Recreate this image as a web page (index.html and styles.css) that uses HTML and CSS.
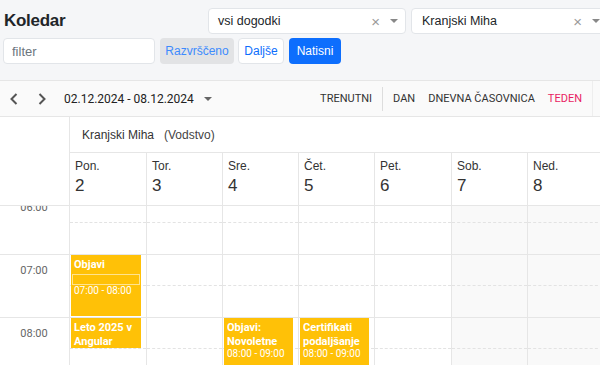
FILE: index.html
```html
<!DOCTYPE html>
<html lang="sl">
<head>
<meta charset="utf-8">
<title>Koledar</title>
<link rel="stylesheet" href="styles.css">
</head>
<body>
<div class="top">
  <div class="row1">
    <h1 class="title">Koledar</h1>
    <div class="select s1"><span class="val">vsi dogodki</span><span class="clear">×</span><span class="caret"></span></div>
    <div class="select s2"><span class="val">Kranjski Miha</span><span class="clear">×</span><span class="caret"></span></div>
  </div>
  <div class="row2">
    <input class="filter" type="text" placeholder="filter">
    <button class="btn btn-gray">Razvrščeno</button>
    <button class="btn btn-outline">Daljše</button>
    <button class="btn btn-primary">Natisni</button>
  </div>
</div>

<div class="toolbar">
  <svg class="chev first" width="8" height="12" viewBox="0 0 8 12"><path d="M6.5 1 L1.5 6 L6.5 11" fill="none" stroke="#555" stroke-width="2"/></svg>
  <svg class="chev second" width="8" height="12" viewBox="0 0 8 12"><path d="M1.5 1 L6.5 6 L1.5 11" fill="none" stroke="#555" stroke-width="2"/></svg>
  <span class="range">02.12.2024 - 08.12.2024</span>
  <span class="range-caret"></span>
  <div class="views">
    <span class="view">Trenutni</span>
    <span class="sep"></span>
    <span class="view">Dan</span>
    <span class="view gap">Dnevna časovnica</span>
    <span class="view gap active">Teden</span>
    <span class="end"></span>
  </div>
</div>

<div class="cal-head">
  <div class="corner"></div>
  <div class="resource"><span>Kranjski Miha</span><span class="role">(Vodstvo)</span></div>
  <div class="day"><div class="dname">Pon.</div><div class="dnum">2</div></div>
  <div class="day"><div class="dname">Tor.</div><div class="dnum">3</div></div>
  <div class="day"><div class="dname">Sre.</div><div class="dnum">4</div></div>
  <div class="day"><div class="dname">Čet.</div><div class="dnum">5</div></div>
  <div class="day"><div class="dname">Pet.</div><div class="dnum">6</div></div>
  <div class="day"><div class="dname">Sob.</div><div class="dnum">7</div></div>
  <div class="day"><div class="dname">Ned.</div><div class="dnum">8</div></div>
</div>

<div class="cal-body">
  <div class="grid">
    <div class="col times">
      <div class="hour"><span class="tlabel">06:00</span></div>
      <div class="hour"><span class="tlabel">07:00</span></div>
      <div class="hour"><span class="tlabel">08:00</span></div>
      <div class="hour"><span class="tlabel">09:00</span></div>
    </div>
    <div class="col">
      <div class="hour"><div class="slot"></div><div class="slot2"></div></div>
      <div class="hour"><div class="slot"></div><div class="slot2"></div></div>
      <div class="hour"><div class="slot"></div><div class="slot2"></div></div>
      <div class="hour"><div class="slot"></div><div class="slot2"></div></div>
      <div class="event ev-objavi">
        <div class="etitle">Objavi</div>
        <div class="ebox"></div>
        <div class="etime">07:00 - 08:00</div>
      </div>
      <div class="event ev-leto">
        <div class="etitle">Leto 2025 v Angular</div>
      </div>
    </div>
    <div class="col">
      <div class="hour"><div class="slot"></div><div class="slot2"></div></div>
      <div class="hour"><div class="slot"></div><div class="slot2"></div></div>
      <div class="hour"><div class="slot"></div><div class="slot2"></div></div>
      <div class="hour"><div class="slot"></div><div class="slot2"></div></div>
    </div>
    <div class="col">
      <div class="hour"><div class="slot"></div><div class="slot2"></div></div>
      <div class="hour"><div class="slot"></div><div class="slot2"></div></div>
      <div class="hour"><div class="slot"></div><div class="slot2"></div></div>
      <div class="hour"><div class="slot"></div><div class="slot2"></div></div>
      <div class="event ev-8">
        <div class="etitle clip">Objavi: Novoletne čestitke</div>
        <div class="etime">08:00 - 09:00</div>
      </div>
    </div>
    <div class="col">
      <div class="hour"><div class="slot"></div><div class="slot2"></div></div>
      <div class="hour"><div class="slot"></div><div class="slot2"></div></div>
      <div class="hour"><div class="slot"></div><div class="slot2"></div></div>
      <div class="hour"><div class="slot"></div><div class="slot2"></div></div>
      <div class="event ev-8">
        <div class="etitle clip">Certifikati podaljšanje</div>
        <div class="etime">08:00 - 09:00</div>
      </div>
    </div>
    <div class="col">
      <div class="hour"><div class="slot"></div><div class="slot2"></div></div>
      <div class="hour"><div class="slot"></div><div class="slot2"></div></div>
      <div class="hour"><div class="slot"></div><div class="slot2"></div></div>
      <div class="hour"><div class="slot"></div><div class="slot2"></div></div>
    </div>
    <div class="col weekend">
      <div class="hour"><div class="slot"></div><div class="slot2"></div></div>
      <div class="hour"><div class="slot"></div><div class="slot2"></div></div>
      <div class="hour"><div class="slot"></div><div class="slot2"></div></div>
      <div class="hour"><div class="slot"></div><div class="slot2"></div></div>
    </div>
    <div class="col weekend">
      <div class="hour"><div class="slot"></div><div class="slot2"></div></div>
      <div class="hour"><div class="slot"></div><div class="slot2"></div></div>
      <div class="hour"><div class="slot"></div><div class="slot2"></div></div>
      <div class="hour"><div class="slot"></div><div class="slot2"></div></div>
    </div>
  </div>
</div>
</body>
</html>
```

FILE: styles.css
```css
* { box-sizing: border-box; }
html, body { margin: 0; padding: 0; overflow: hidden; }
body {
  width: 600px;
  height: 365px;
  background: #fff;
  font-family: "Liberation Sans", Arial, sans-serif;
  color: #212529;
}

/* ---------- top area ---------- */
.top {
  height: 80px;
  background: #f5f6f8;
  padding-top: 8px;
  overflow: hidden;
}
.row1 { display: flex; align-items: center; height: 26px; }
.title {
  margin: 0 0 0 4px;
  flex: 0 0 204px;
  font-size: 17px;
  font-weight: 700;
  letter-spacing: -0.3px;
  color: #212529;
}
.select {
  flex: 0 0 198px;
  height: 26px;
  display: flex;
  align-items: center;
  background: #fff;
  border: 1px solid #e2e5e9;
  border-radius: 4px;
  padding-left: 9px;
  font-size: 12.5px;
  color: #212529;
}
.select .val { flex: 1; white-space: nowrap; }
.s2 { margin-left: 5px; flex-basis: 197px; flex-shrink: 0; padding-left: 10px; }
.clear { color: #9a9a9a; font-size: 15px; margin-right: 10px; line-height: 1; }
.caret {
  width: 0; height: 0;
  border-left: 4px solid transparent;
  border-right: 4px solid transparent;
  border-top: 4px solid #888;
  margin-right: 7px;
}

.row2 { display: flex; height: 26px; margin-top: 4px; padding-left: 3px; }
.filter {
  width: 152px;
  height: 26px;
  border: 1px solid #e2e5e9;
  border-radius: 4px;
  background: #fff;
  padding: 0 0 0 8px;
  font-family: "Liberation Sans", Arial, sans-serif;
  font-size: 13px;
  outline: none;
}
.filter::placeholder { color: #6c757d; }
.btn {
  height: 26px;
  border-radius: 4px;
  font-family: "Liberation Sans", Arial, sans-serif;
  font-size: 12px;
  padding: 0;
  border: 1px solid transparent;
  cursor: pointer;
}
.btn-gray { margin-left: 5px; width: 74px; background: #e2e3e5; color: #3d8bfd; }
.btn-outline { margin-left: 4px; width: 46px; background: #fff; border-color: #e2e5e9; color: #0d6efd; }
.btn-primary { margin-left: 5px; width: 52px; background: #0d6efd; color: #fff; }

/* ---------- toolbar ---------- */
.toolbar {
  height: 37px;
  display: flex;
  align-items: center;
  background: #fafafa;
  border-top: 1px solid #e6e6e6;
  border-bottom: 1px solid #e6e6e6;
  font-family: Roboto, "Liberation Sans", sans-serif;
  color: #222;
}
.chev { display: block; flex: 0 0 8px; }
.chev.first { margin-left: 10px; }
.chev.second { margin-left: 20px; }
.range { margin-left: 18px; font-size: 12px; color: #222; white-space: nowrap; }
.range-caret {
  margin-left: 10px;
  width: 0; height: 0;
  border-left: 4px solid transparent;
  border-right: 4px solid transparent;
  border-top: 4px solid #666;
}
.views { margin-left: auto; display: flex; align-items: center; height: 100%; }
.view { font-size: 11px; text-transform: uppercase; color: #333; white-space: nowrap; }
.view.gap { margin-left: 13px; }
.view.active { color: #e91e63; }
.sep { width: 1px; height: 24px; background: #ddd; margin: 0 10px 0 10px; }
.end { width: 8px; height: 100%; border-left: 1px solid #eee; margin-left: 10px; }

/* ---------- calendar header ---------- */
.cal-head,
.grid {
  display: grid;
  grid-template-columns: 70px 77px 76px 76px 76px 77px 76px 76px;
  width: 604px;
}
.cal-head { grid-template-rows: 36px 53px; }
.corner {
  grid-row: 1 / 3;
  grid-column: 1;
  border-right: 1px solid #e6e6e6;
  border-bottom: 1px solid #e6e6e6;
}
.resource {
  grid-column: 2 / 9;
  display: flex;
  align-items: center;
  padding-left: 12px;
  border-bottom: 1px solid #e6e6e6;
  font-size: 12px;
  color: #333;
}
.resource .role { margin-left: 10px; color: #444; }
.day {
  border-right: 1px solid #e6e6e6;
  border-bottom: 1px solid #e6e6e6;
  padding: 6px 0 0 5px;
  color: #333;
}
.dname { font-size: 12px; line-height: 14px; }
.dnum { font-size: 17px; line-height: 20px; margin-top: 3px; }

/* ---------- calendar body ---------- */
.cal-body { height: 159px; overflow: hidden; }
.grid { margin-top: -15px; }
.col { position: relative; border-right: 1px solid #e6e6e6; }
.col.weekend { background: #f9f9f9; }
.hour { height: 63px; border-top: 1px solid #e6e6e6; }
.slot { height: 31px; border-bottom: 1px dashed #e3e3e3; }
.slot2 { height: 31px; }
.times .hour { padding-top: 9px; text-align: center; }
.tlabel {
  display: block;
  font-family: Roboto, "Liberation Sans", sans-serif;
  font-size: 11px;
  line-height: 13px;
  color: #666;
  padding-right: 1px;
}

.event {
  position: absolute;
  left: 1px;
  right: 5px;
  background: #ffc107;
  color: #fff;
  padding: 3px 3px 0;
  overflow: hidden;
  font-family: Roboto, "Liberation Sans", sans-serif;
}
.etitle { font-size: 11px; font-weight: 700; line-height: 14px; }
.etitle.clip { max-height: 26px; overflow: hidden; }
.etime { font-size: 10px; line-height: 12px; margin-top: 1px; white-space: nowrap; }
.ebox {
  height: 11px;
  margin: 2px -2px 0;
  border: 1px solid #ffe38f;
}
.ev-objavi { top: 64px; height: 61px; }
.ev-objavi .etime { margin-top: 0; }
.ev-leto { top: 127px; height: 30px; }
.ev-8 { top: 127px; height: 62px; }
```
